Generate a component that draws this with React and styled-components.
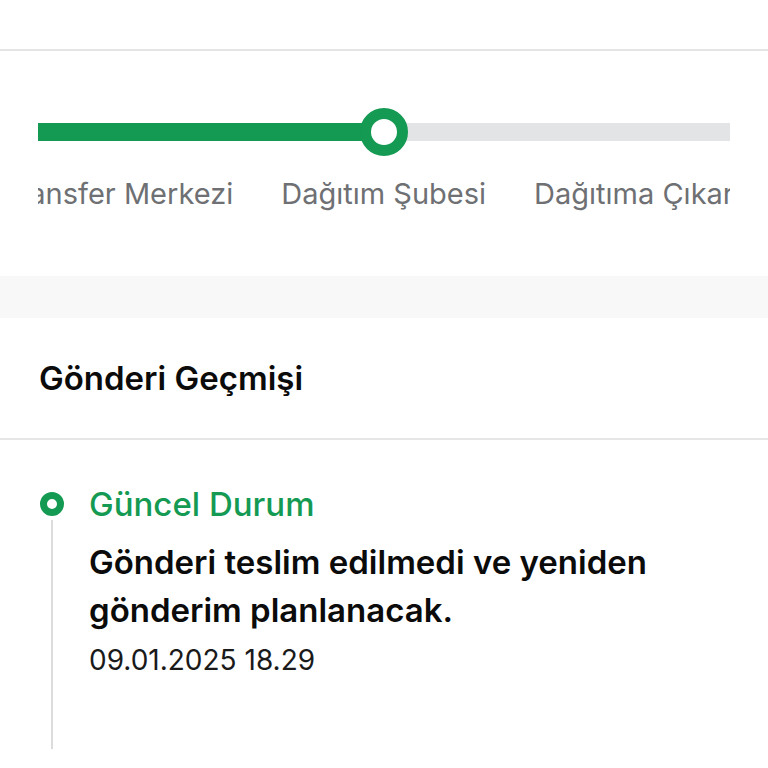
import React, { useLayoutEffect, useRef } from "react";
import styled, { createGlobalStyle } from "styled-components";

const GREEN = "#149a52";

const steps = [
  "Gönderi Alındı",
  "Transfer Merkezi",
  "Dağıtım Şubesi",
  "Dağıtıma Çıkarıldı",
  "Teslim Edildi",
];
const activeStep = 2;

const history = [
  {
    title: "Güncel Durum",
    text: "Gönderi teslim edilmedi ve yeniden gönderim planlanacak.",
    date: "09.01.2025 18.29",
  },
];

const App = () => {
  const scrollRef = useRef(null);
  const activeRef = useRef(null);

  // keep the current step centred in the track
  useLayoutEffect(() => {
    const box = scrollRef.current;
    const item = activeRef.current;
    if (!box || !item) return;
    box.scrollLeft =
      item.offsetLeft + item.offsetWidth / 2 - box.clientWidth / 2;
  }, []);

  return (
    <>
      <GlobalStyle />
      <Page>
        <TopBar />
        <ProgressCard>
          <Track ref={scrollRef}>
            <StepRow>
              {steps.map((label, i) => (
                <Step key={label} ref={i === activeStep ? activeRef : null}>
                  <Segment
                    $state={
                      i < activeStep ? "done" : i === activeStep ? "current" : "todo"
                    }
                  >
                    {i === activeStep && <Knob />}
                  </Segment>
                  <StepLabel>{label}</StepLabel>
                </Step>
              ))}
            </StepRow>
          </Track>
        </ProgressCard>
        <Spacer />
        <HistorySection>
          <SectionTitle>Gönderi Geçmişi</SectionTitle>
          <Entries>
            {history.map((item) => (
              <Entry key={item.date}>
                <Rail>
                  <Dot />
                  <RailLine />
                </Rail>
                <EntryBody>
                  <EntryTitle>{item.title}</EntryTitle>
                  <EntryText>{item.text}</EntryText>
                  <EntryDate>{item.date}</EntryDate>
                </EntryBody>
              </Entry>
            ))}
          </Entries>
        </HistorySection>
      </Page>
    </>
  );
};

const GlobalStyle = createGlobalStyle`
  body {
    margin: 0;
    background: #fff;
    font-family: Inter, "Noto Sans", sans-serif;
  }
`;

const Page = styled.div`
  width: 768px;
  height: 768px;
  overflow: hidden;
  display: flex;
  flex-direction: column;
  background: #fff;
`;

const TopBar = styled.div`
  height: 49px;
  flex-shrink: 0;
  border-bottom: 2px solid #e6e6e6;
`;

const ProgressCard = styled.div`
  height: 225px;
  flex-shrink: 0;
  padding: 56px 38px 0;
  box-sizing: border-box;
  background: #fff;
  box-shadow: 0 2px 5px rgba(0, 0, 0, 0.06);
`;

const Track = styled.div`
  position: relative;
  overflow-x: auto;
  scrollbar-width: none;
  &::-webkit-scrollbar {
    display: none;
  }
`;

const StepRow = styled.div`
  display: flex;
  width: max-content;
`;

const Step = styled.div`
  display: flex;
  flex-direction: column;
  align-items: center;
`;

const Segment = styled.div`
  position: relative;
  align-self: stretch;
  height: 18px;
  margin-top: 16px;
  background: ${({ $state }) =>
    $state === "done"
      ? GREEN
      : $state === "current"
      ? `linear-gradient(to right, ${GREEN} 50%, #e3e4e6 50%)`
      : "#e3e4e6"};
`;

const Knob = styled.span`
  position: absolute;
  left: 50%;
  top: 50%;
  width: 48px;
  height: 48px;
  box-sizing: border-box;
  border-radius: 50%;
  border: 11px solid ${GREEN};
  background: #fff;
  transform: translate(-50%, -50%);
`;

const StepLabel = styled.span`
  padding: 0 24px;
  margin-top: 35px;
  font-size: 29px;
  line-height: 36px;
  color: #6e7073;
  white-space: nowrap;
`;

const Spacer = styled.div`
  height: 42px;
  flex-shrink: 0;
  background: #f8f8f8;
`;

const HistorySection = styled.section`
  flex: 1;
  background: #fff;
`;

const SectionTitle = styled.h2`
  margin: 0;
  height: 122px;
  box-sizing: border-box;
  padding: 0 39px;
  display: flex;
  align-items: center;
  font-size: 33px;
  font-weight: 600;
  color: #0b0b0b;
  border-bottom: 2px solid #e6e6e6;
`;

const Entries = styled.div`
  padding: 44px 0 0 40px;
`;

const Entry = styled.div`
  display: flex;
  gap: 25px;
`;

const Rail = styled.div`
  width: 24px;
  display: flex;
  flex-direction: column;
  align-items: center;
  padding-top: 8px;
`;

const Dot = styled.span`
  width: 24px;
  height: 24px;
  box-sizing: border-box;
  border-radius: 50%;
  border: 7px solid ${GREEN};
  flex-shrink: 0;
`;

const RailLine = styled.span`
  width: 2px;
  height: 229px;
  margin-top: 4px;
  background: #dcdcdc;
`;

const EntryBody = styled.div`
  display: flex;
  flex-direction: column;
`;

const EntryTitle = styled.div`
  font-size: 33px;
  line-height: 40px;
  font-weight: 500;
  color: ${GREEN};
`;

const EntryText = styled.div`
  margin-top: 14px;
  width: 620px;
  font-size: 33px;
  line-height: 48px;
  font-weight: 600;
  color: #0b0b0b;
`;

const EntryDate = styled.div`
  margin-top: 9px;
  font-size: 28px;
  line-height: 34px;
  color: #1a1a1a;
`;

export default App;
